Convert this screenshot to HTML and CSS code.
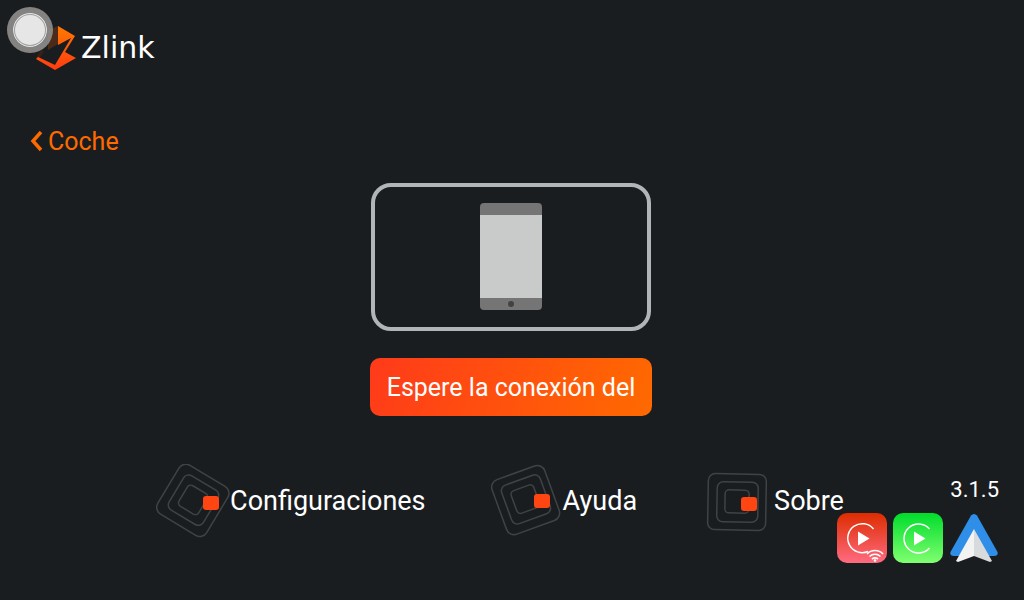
FILE: index.html
```
<!DOCTYPE html>
<html lang="es">
<head>
    <meta charset="UTF-8">
    <meta name="viewport" content="width=device-width, initial-scale=1">
    <title>Zlink</title>
    <link rel="stylesheet" href="styles.css">
</head>
<body>
    <header class="header">
        <svg class="logo" viewBox="0 0 40 44" aria-hidden="true">
            <defs>
                <linearGradient id="logoGrad" x1="0" y1="0" x2="0" y2="1">
                    <stop offset="0" stop-color="#ff7a00"/>
                    <stop offset="1" stop-color="#ff3c10"/>
                </linearGradient>
            </defs>
            <path d="M12 4 22 0V18L12 24z" fill="#4a2a18"/>
            <path d="M0 32 5 24 8 25 4 32z" fill="#3a2018"/>
            <path d="M22 0 39 10 29 26 40 32 19 44 0 33 2 31 19 39 35 12 22 19z" fill="url(#logoGrad)"/>
        </svg>
        <span class="brand">Zlink</span>
    </header>

    <a class="back" href="#">
        <svg class="back-icon" viewBox="0 0 14 22" aria-hidden="true">
            <path d="M11 1 3 10 11 19" fill="none" stroke="currentColor" stroke-width="3.500"/>
        </svg>
        Coche
    </a>

    <main class="connect">
        <div class="device">
            <svg class="phone" viewBox="0 0 62 108" aria-hidden="true">
                <rect width="62" height="107" rx="4" fill="#757575"/>
                <rect y="12" width="62" height="83" fill="#c9cbca"/>
                <circle cx="31" cy="101" r="3" fill="#424242"/>
            </svg>
        </div>
        <button class="wait" type="button">Espere la conexión del</button>
    </main>

    <nav class="menu">
        <a class="menu-item" href="#">
            <svg class="menu-icon" viewBox="0 0 74 74" aria-hidden="true">
                <g class="rings" transform="rotate(31 37 37)">
                    <rect x="8" y="8" width="57" height="57" rx="8"/>
                    <rect x="17" y="16" width="40" height="40" rx="6"/>
                    <rect x="25" y="24" width="23" height="24" rx="4"/>
                </g>
                <rect class="dot" x="47" y="32" width="16" height="14" rx="3"/>
            </svg>
            Configuraciones
        </a>
        <a class="menu-item" href="#">
            <svg class="menu-icon" viewBox="0 0 74 74" aria-hidden="true">
                <g class="rings" transform="rotate(-20 37 37)">
                    <rect x="9" y="7" width="56" height="58" rx="8"/>
                    <rect x="17" y="15" width="41" height="41" rx="6"/>
                    <rect x="25" y="23" width="24" height="24" rx="4"/>
                </g>
                <rect class="dot" x="45" y="30" width="16" height="14" rx="3"/>
            </svg>
            Ayuda
        </a>
        <a class="menu-item" href="#">
            <svg class="menu-icon" viewBox="0 0 74 74" aria-hidden="true">
                <g class="rings" transform="rotate(1 37 37)">
                    <rect x="8" y="10" width="58" height="56" rx="7"/>
                    <rect x="17" y="18" width="41" height="40" rx="6"/>
                    <rect x="25" y="26" width="24" height="23" rx="4"/>
                </g>
                <rect class="dot" x="41" y="33" width="16" height="14" rx="3"/>
            </svg>
            Sobre
        </a>
    </nav>

    <aside class="status">
        <div class="version">3.1.5</div>
        <div class="apps">
            <svg class="app" viewBox="0 0 50 50" role="img" aria-label="CarPlay inalámbrico">
                <defs>
                    <linearGradient id="redGrad" x1="0" y1="0" x2="0" y2="1">
                        <stop offset="0" stop-color="#dd2c00"/>
                        <stop offset="1" stop-color="#ff6b80"/>
                    </linearGradient>
                </defs>
                <rect width="50" height="50" rx="10" fill="url(#redGrad)"/>
                <path d="M36.500 16A14.500 14.500 0 1 0 31 38.500" fill="none" stroke="#fff" stroke-width="1.500"/>
                <path d="M21 18.500v14l11.500-7z" fill="#fff"/>
                <g fill="none" stroke="#fff" stroke-width="1.600">
                    <path d="M30 41a11 11 0 0 1 16 0"/>
                    <path d="M32.500 43.500a8 8 0 0 1 11 0"/>
                    <path d="M35 46a5 5 0 0 1 6 0"/>
                </g>
                <circle cx="38" cy="47.500" r="1.300" fill="#fff"/>
            </svg>
            <svg class="app" viewBox="0 0 50 50" role="img" aria-label="CarPlay">
                <defs>
                    <linearGradient id="greenGrad" x1="0" y1="0" x2="0" y2="1">
                        <stop offset="0" stop-color="#00dc2c"/>
                        <stop offset="1" stop-color="#80ff70"/>
                    </linearGradient>
                </defs>
                <rect width="50" height="50" rx="10" fill="url(#greenGrad)"/>
                <path d="M36.500 16A14.500 14.500 0 1 0 36.500 35" fill="none" stroke="#fff" stroke-width="1.500"/>
                <path d="M21 18.500v14l11.500-7z" fill="#fff"/>
            </svg>
            <svg class="app" viewBox="0 0 50 50" role="img" aria-label="Android Auto">
                <path d="M22 2.500Q25-.500 28 2.500L48.500 39Q49.500 43 45 43H5Q.500 43 1.500 39z" fill="#2f8fe8"/>
                <path d="M25 16 43 48 41 49 25 43z" fill="#d9dadb"/>
                <path d="M25 16 7 48 9 49 25 43z" fill="#f3f3f3"/>
            </svg>
        </div>
    </aside>

    <button class="assist" type="button" aria-label="Botón flotante"></button>
</body>
</html>
```

FILE: styles.css
```
* {
    box-sizing: border-box;
}
body {
    display: flex;
    flex-direction: column;
    position: relative;
    min-height: 100vh;
    margin: 0;
    background: #1a1d1f;
    color: #fff;
    font-family: Roboto, "Liberation Sans", sans-serif;
    font-size: 27px;
}
a {
    color: inherit;
    text-decoration: none;
}
.header {
    display: flex;
    align-items: center;
    gap: 5px;
    padding: 26px 36px 0;
}
.logo {
    width: 40px;
    height: 44px;
}
.brand {
    font-family: "DejaVu Sans", sans-serif;
    font-size: 30px;
    line-height: 44px;
}
.back {
    display: flex;
    align-items: center;
    align-self: flex-start;
    gap: 4px;
    margin-top: 56px;
    padding-left: 30px;
    color: #ff6a00;
    font-size: 25px;
    line-height: 32px;
}
.back-icon {
    width: 14px;
    height: 22px;
}
.connect {
    display: flex;
    flex-direction: column;
    align-items: center;
    gap: 27px;
    margin-top: 25px;
    padding-right: 2px;
}
.device {
    display: flex;
    justify-content: center;
    padding: 16px 105px;
    border: 4px solid #b2b5b6;
    border-radius: 20px;
}
.phone {
    width: 62px;
    height: 108px;
}
.wait {
    padding: 15px 17px 13px;
    border: 0;
    border-radius: 10px;
    background: linear-gradient(110deg, #ff3a1a, #ff6a00);
    color: #fff;
    font-family: inherit;
    font-size: 25px;
    line-height: 30px;
}
.menu {
    display: flex;
    justify-content: center;
    gap: 63px;
    margin-top: 48px;
    padding-right: 24px;
}
.menu-item {
    display: flex;
    align-items: center;
    line-height: 74px;
}
.menu-icon {
    width: 74px;
    height: 74px;
}
.rings {
    fill: none;
    stroke: #404345;
    stroke-width: 1.5;
}
.dot {
    fill: #ff4512;
}

/* versión y apps, encima del menú */
.status {
    position: absolute;
    right: 25px;
    bottom: 37px;
}
.version {
    font-size: 22px;
    line-height: 24px;
    margin-bottom: 11px;
    text-align: right;
}
.apps {
    display: flex;
    gap: 6px;
}
.app {
    width: 50px;
    height: 50px;
}
.assist {
    position: absolute;
    top: 7px;
    left: 7px;
    width: 46px;
    height: 46px;
    padding: 0;
    border: 6px solid rgba(148, 146, 144, 0.88);
    border-radius: 50%;
    background: #e6e6e6;
    background-clip: padding-box;
    box-shadow: inset 0 0 0 1px #e6e6e6, inset 0 0 0 2px #a0a0a0;
}
```
